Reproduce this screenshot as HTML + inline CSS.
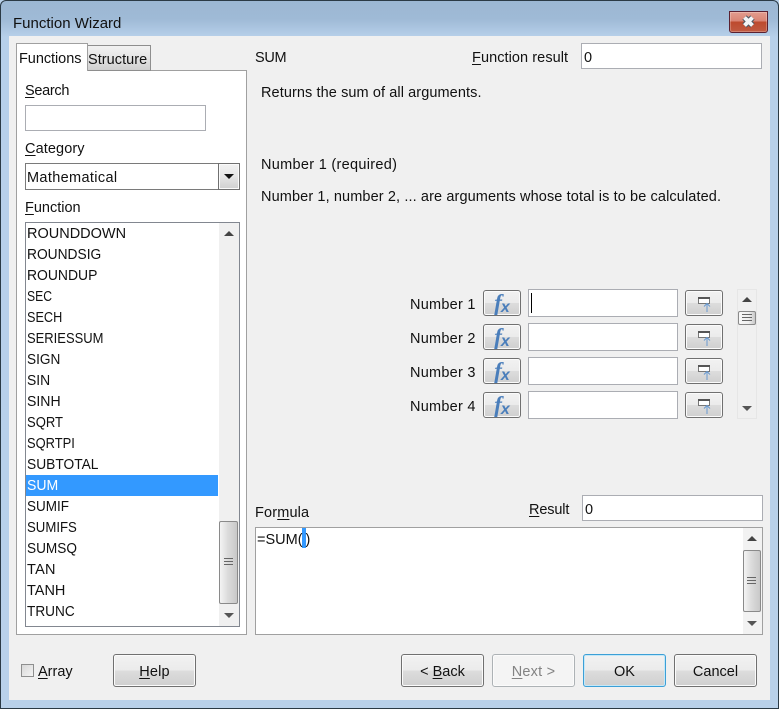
<!DOCTYPE html>
<html><head><meta charset="utf-8"><style>
html,body{margin:0;padding:0;background:#b9d1ea}
body{width:779px;height:709px;position:relative;overflow:hidden;font-family:"Liberation Sans",sans-serif;font-size:14.5px;color:#111}
div,span.a{position:absolute;box-sizing:border-box}
.t{white-space:nowrap;line-height:20px;height:20px;margin-top:1px}
.in{background:#fff;border:1px solid #abadb3}
.btn{border:1px solid #707070;border-radius:3px;background:linear-gradient(#f2f2f2 0,#ebebeb 50%,#dddddd 50%,#cfcfcf 100%);box-shadow:inset 0 0 0 1px #fbfbfb;text-align:center;line-height:33px;padding-top:1px}
.fx{left:483px;width:38px;height:26px;border:1px solid #707070;border-radius:3px;background:linear-gradient(#f2f2f2 0,#ebebeb 50%,#dddddd 50%,#cfcfcf 100%);box-shadow:inset 0 0 0 1px #fbfbfb;color:#4a7ebb;text-align:center;line-height:24px;font-weight:bold;font-style:italic}
.fx i{font-family:"Liberation Serif",serif;font-size:23px;letter-spacing:-1px}
.fx small{font-family:"Liberation Sans",sans-serif;font-size:16px;position:relative;top:2px}
.ref{left:685px;width:38px;height:26px;border:1px solid #707070;border-radius:3px;background:linear-gradient(#f2f2f2 0,#ebebeb 50%,#dddddd 50%,#cfcfcf 100%);box-shadow:inset 0 0 0 1px #fbfbfb}
.ref svg{position:absolute;left:12px;top:5px}
.li{left:27px;white-space:nowrap;line-height:21px;height:21px;margin-top:1px;transform-origin:0 50%}
u{text-decoration-thickness:1px;text-underline-offset:2px}
.up{width:0;height:0;border-left:5px solid transparent;border-right:5px solid transparent;border-bottom:5px solid #444}
.dn{width:0;height:0;border-left:5px solid transparent;border-right:5px solid transparent;border-top:5px solid #555}
.thumb{border:1px solid #8a8a8a;border-radius:2px;background:linear-gradient(90deg,#f4f4f4,#dcdcdc 45%,#c8c8c8)}
.grip{height:7px;border-top:1px solid #666;border-bottom:1px solid #666}
.grip:after{content:"";position:absolute;left:0;right:0;top:2px;height:1px;background:#666}
</style></head><body>
<div style="left:0;top:0;width:779px;height:709px;border:1px solid #2b3a45;border-radius:6px 6px 0 0;background:linear-gradient(#9cb7d3 0,#9fbad6 18px,#b7d0ea 36px,#b9d1ea 100%)"></div>
<div class="t" style="left:13px;top:13px;font-size:15px">Function Wizard</div>
<div style="left:729px;top:11px;width:39px;height:22px;border:1px solid #5a2030;border-radius:0 0 3px 3px;background:linear-gradient(#e39c8e 0,#d98474 45%,#bd4a2e 50%,#c05a42 100%);box-shadow:inset 0 0 0 1px rgba(255,255,255,.25)">
<svg width="37" height="20" style="position:absolute;left:0;top:0"><path d="M14.5 5.5l8 8M22.5 5.5l-8 8" stroke="#4a5660" stroke-width="6"/><path d="M14.5 5.5l8 8M22.5 5.5l-8 8" stroke="#f2f4f6" stroke-width="4"/></svg></div>
<div style="left:9px;top:36px;width:761px;height:664px;background:#f0f0f0"></div>

<div style="left:16px;top:70px;width:231px;height:565px;background:#fff;border:1px solid #a0a0a0"></div>
<div style="left:87px;top:45px;width:64px;height:26px;border:1px solid #8e8e8e;background:linear-gradient(#f2f2f2,#e4e4e4 50%,#cfcfcf)"></div>
<div class="t" style="left:88px;top:49px;letter-spacing:.05px">Structure</div>
<div style="left:16px;top:43px;width:72px;height:28px;border:1px solid #a0a0a0;border-bottom:0;background:#fff"></div>
<div class="t" style="left:19px;top:48px;letter-spacing:-.05px">Functions</div>

<div class="t" style="left:25px;top:80px;letter-spacing:-.3px"><u>S</u>earch</div>
<div class="in" style="left:25px;top:105px;width:181px;height:26px"></div>
<div class="t" style="left:25px;top:138px;letter-spacing:.1px"><u>C</u>ategory</div>
<div style="left:25px;top:163px;width:215px;height:27px;background:#fff;border:1px solid #7a7a7a"></div>
<div class="t" style="left:27px;top:167px;letter-spacing:.35px">Mathematical</div>
<div style="left:218px;top:163px;width:22px;height:27px;border:1px solid #707070;background:linear-gradient(#f2f2f2,#e6e6e6 50%,#cfcfcf);box-shadow:inset 0 0 0 1px #fafafa"></div>
<div style="left:224px;top:174px;width:0;height:0;border-left:5px solid transparent;border-right:5px solid transparent;border-top:5px solid #111"></div>
<div class="t" style="left:25px;top:197px"><u>F</u>unction</div>

<div style="left:25px;top:222px;width:215px;height:405px;background:#fff;border:1px solid #828790;overflow:hidden"></div>
<div style="left:219px;top:223px;width:20px;height:403px;background:#f0f0f0"></div>
<div class="up" style="left:224px;top:231px"></div>
<div class="dn" style="left:224px;top:613px"></div>
<div class="thumb" style="left:219px;top:521px;width:19px;height:83px"></div>
<div class="grip" style="left:224px;top:558px;width:9px"></div>
<div style="left:26px;top:475px;width:192px;height:21px;background:#3399ff"></div>
<div class="li" style="top:223px">ROUNDDOWN</div>
<div class="li" style="top:244px;transform:scaleX(.95)">ROUNDSIG</div>
<div class="li" style="top:265px;transform:scaleX(.96)">ROUNDUP</div>
<div class="li" style="top:286px;transform:scaleX(.84)">SEC</div>
<div class="li" style="top:307px;transform:scaleX(.875)">SECH</div>
<div class="li" style="top:328px;transform:scaleX(.895)">SERIESSUM</div>
<div class="li" style="top:349px;transform:scaleX(.94)">SIGN</div>
<div class="li" style="top:370px;transform:scaleX(.96)">SIN</div>
<div class="li" style="top:391px;transform:scaleX(.97)">SINH</div>
<div class="li" style="top:412px;transform:scaleX(.9)">SQRT</div>
<div class="li" style="top:433px;transform:scaleX(.89)">SQRTPI</div>
<div class="li" style="top:454px;transform:scaleX(.95)">SUBTOTAL</div>
<div class="li" style="top:475px;color:#fff;transform:scaleX(.97)">SUM</div>
<div class="li" style="top:496px;transform:scaleX(.93)">SUMIF</div>
<div class="li" style="top:517px;transform:scaleX(.91)">SUMIFS</div>
<div class="li" style="top:538px;transform:scaleX(.94)">SUMSQ</div>
<div class="li" style="top:559px;letter-spacing:.3px">TAN</div>
<div class="li" style="top:580px">TANH</div>
<div class="li" style="top:601px;transform:scaleX(.94)">TRUNC</div>

<div class="t" style="left:255px;top:47px;letter-spacing:-.3px">SUM</div>
<div class="t" style="left:472px;top:47px;letter-spacing:.07px"><u>F</u>unction result</div>
<div class="in" style="left:581px;top:43px;width:181px;height:26px"></div>
<div class="t" style="left:584px;top:47px">0</div>
<div class="t" style="left:261px;top:82px;letter-spacing:.09px">Returns the sum of all arguments.</div>
<div class="t" style="left:261px;top:154px;letter-spacing:.3px">Number 1 (required)</div>
<div class="t" style="left:261px;top:186px;letter-spacing:.114px">Number 1, number 2, ... are arguments whose total is to be calculated.</div>

<div class="t" style="left:410px;top:294px;letter-spacing:.25px">Number 1</div>
<div class="t" style="left:410px;top:328px;letter-spacing:.25px">Number 2</div>
<div class="t" style="left:410px;top:362px;letter-spacing:.25px">Number 3</div>
<div class="t" style="left:410px;top:396px;letter-spacing:.25px">Number 4</div>

<div class="fx" style="top:290px"><i>f</i><small>x</small></div>
<div class="fx" style="top:324px"><i>f</i><small>x</small></div>
<div class="fx" style="top:358px"><i>f</i><small>x</small></div>
<div class="fx" style="top:392px"><i>f</i><small>x</small></div>

<div class="in" style="left:528px;top:289px;width:150px;height:28px"></div>
<div class="in" style="left:528px;top:323px;width:150px;height:28px"></div>
<div class="in" style="left:528px;top:357px;width:150px;height:28px"></div>
<div class="in" style="left:528px;top:391px;width:150px;height:28px"></div>
<div style="left:531px;top:293px;width:1px;height:20px;background:#000"></div>

<div class="ref" style="top:290px"><svg width="16" height="17"><rect x="0.5" y="1.5" width="11" height="6" fill="#fff" stroke="#777"/><rect x="0" y="1" width="12" height="2" fill="#555"/><path d="M9 16V7.5M6 10.5l3-3 3 3" fill="none" stroke="#6a9ad0"/></svg></div>
<div class="ref" style="top:324px"><svg width="16" height="17"><rect x="0.5" y="1.5" width="11" height="6" fill="#fff" stroke="#777"/><rect x="0" y="1" width="12" height="2" fill="#555"/><path d="M9 16V7.5M6 10.5l3-3 3 3" fill="none" stroke="#6a9ad0"/></svg></div>
<div class="ref" style="top:358px"><svg width="16" height="17"><rect x="0.5" y="1.5" width="11" height="6" fill="#fff" stroke="#777"/><rect x="0" y="1" width="12" height="2" fill="#555"/><path d="M9 16V7.5M6 10.5l3-3 3 3" fill="none" stroke="#6a9ad0"/></svg></div>
<div class="ref" style="top:392px"><svg width="16" height="17"><rect x="0.5" y="1.5" width="11" height="6" fill="#fff" stroke="#777"/><rect x="0" y="1" width="12" height="2" fill="#555"/><path d="M9 16V7.5M6 10.5l3-3 3 3" fill="none" stroke="#6a9ad0"/></svg></div>

<div style="left:737px;top:289px;width:20px;height:130px;background:#f0f0f0;border:1px solid #e6e6e6"></div>
<div class="up" style="left:742px;top:297px"></div>
<div class="dn" style="left:742px;top:406px"></div>
<div class="thumb" style="left:738px;top:311px;width:18px;height:14px;background:linear-gradient(90deg,#f8f8f8,#f0f0f0 60%,#c8c8c8)"></div>
<div class="grip" style="left:742px;top:314px;width:10px"></div>

<div class="t" style="left:255px;top:502px;letter-spacing:.15px">For<u>m</u>ula</div>
<div class="t" style="left:529px;top:499px;letter-spacing:-.15px"><u>R</u>esult</div>
<div class="in" style="left:582px;top:495px;width:181px;height:26px"></div>
<div class="t" style="left:585px;top:499px">0</div>
<div style="left:255px;top:527px;width:508px;height:108px;background:#fff;border:1px solid #a0a0a0"></div>
<div style="left:302px;top:528px;width:4px;height:20px;background:#3399ff"></div>
<div class="t" style="left:257px;top:529px">=SUM<span style="letter-spacing:3px">(</span>)</div>
<div style="left:743px;top:528px;width:19px;height:106px;background:#f2f2f2"></div>
<div class="up" style="left:747px;top:536px"></div>
<div class="dn" style="left:747px;top:621px"></div>
<div class="thumb" style="left:743px;top:550px;width:18px;height:62px"></div>
<div class="grip" style="left:747px;top:577px;width:9px"></div>

<div style="left:21px;top:664px;width:13px;height:13px;border:1px solid #8e8f8f;background:linear-gradient(135deg,#d8d8d8,#f4f4f4)"></div>
<div class="t" style="left:38px;top:661px"><u>A</u>rray</div>
<div class="btn" style="left:113px;top:654px;width:83px;height:33px;letter-spacing:.2px"><u>H</u>elp</div>
<div class="btn" style="left:401px;top:654px;width:83px;height:33px">&lt; <u>B</u>ack</div>
<div class="btn" style="left:492px;top:654px;width:83px;height:33px;background:#f4f4f4;border-color:#adb2b5;color:#838383;letter-spacing:.2px"><u>N</u>ext &gt;</div>
<div class="btn" style="left:583px;top:654px;width:83px;height:33px;border-color:#3c9fd6;box-shadow:inset 0 0 0 1px #c4e8f8">OK</div>
<div class="btn" style="left:674px;top:654px;width:83px;height:33px">Cancel</div>
</body></html>
